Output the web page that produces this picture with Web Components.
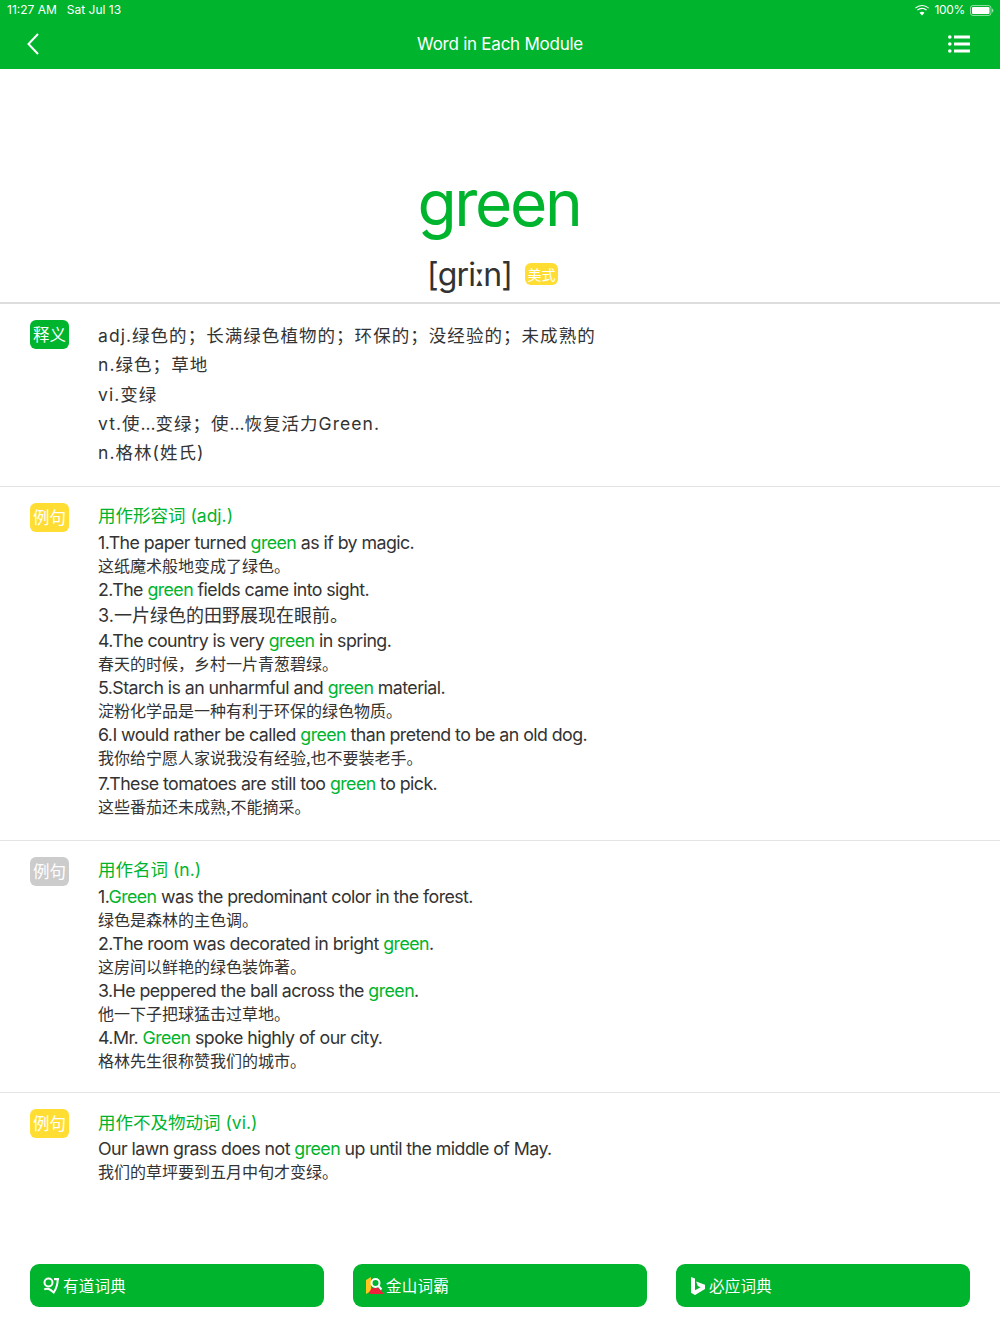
<!DOCTYPE html>
<html lang="zh">
<head>
<meta charset="utf-8">
<title>Word in Each Module</title>
<style>
html,body{margin:0;padding:0;background:#fff}
body{font-family:"Inter","Noto Sans CJK SC",sans-serif;color:#333}
</style>
</head>
<body>
<app-page>
  <status-bar></status-bar>
  <nav-bar title="Word in Each Module"></nav-bar>
  <word-head word="green" tag="美式"></word-head>
  <dict-section label="释义" tone="green" pb="18.500">
    <def-line>adj.绿色的；长满绿色植物的；环保的；没经验的；未成熟的</def-line>
    <def-line>n.绿色；草地</def-line>
    <def-line>vi.变绿</def-line>
    <def-line>vt.使<t-d>...</t-d>变绿；使<t-d>...</t-d>恢复活力Green.</def-line>
    <def-line>n.格林(姓氏)</def-line>
  </dict-section>
  <dict-section label="例句" tone="yellow" pb="21">
    <sec-title>用作形容词 (adj.)</sec-title>
    <en-line>1.The paper turned <g-w>green</g-w> as if by magic.</en-line>
    <cn-line>这纸魔术般地变成了绿色。</cn-line>
    <en-line>2.The <g-w>green</g-w> fields came into sight.</en-line>
    <en-line cjk>3.一片绿色的田野展现在眼前。</en-line>
    <en-line tall>4.The country is very <g-w>green</g-w> in spring.</en-line>
    <cn-line>春天的时候，乡村一片青葱碧绿。</cn-line>
    <en-line>5.Starch is an unharmful and <g-w>green</g-w> material.</en-line>
    <cn-line>淀粉化学品是一种有利于环保的绿色物质。</cn-line>
    <en-line>6.I would rather be called <g-w>green</g-w> than pretend to be an old dog.</en-line>
    <cn-line>我你给宁愿人家说我没有经验,也不要装老手。</cn-line>
    <en-line taller>7.These tomatoes are still too <g-w>green</g-w> to pick.</en-line>
    <cn-line>这些番茄还未成熟,不能摘采。</cn-line>
  </dict-section>
  <dict-section label="例句" tone="gray" pb="20">
    <sec-title>用作名词 (n.)</sec-title>
    <en-line>1.<g-w>Green</g-w> was the predominant color in the forest.</en-line>
    <cn-line>绿色是森林的主色调。</cn-line>
    <en-line>2.The room was decorated in bright <g-w>green</g-w>.</en-line>
    <cn-line>这房间以鲜艳的绿色装饰著。</cn-line>
    <en-line>3.He peppered the ball across the <g-w>green</g-w>.</en-line>
    <cn-line>他一下子把球猛击过草地。</cn-line>
    <en-line>4.Mr. <g-w>Green</g-w> spoke highly of our city.</en-line>
    <cn-line>格林先生很称赞我们的城市。</cn-line>
  </dict-section>
  <dict-section label="例句" tone="yellow" pb="0" last>
    <sec-title>用作不及物动词 (vi.)</sec-title>
    <en-line>Our lawn grass does not <g-w>green</g-w> up until the middle of May.</en-line>
    <cn-line>我们的草坪要到五月中旬才变绿。</cn-line>
  </dict-section>
  <foot-bar>
    <dict-button label="有道词典" icon="youdao"></dict-button>
    <dict-button label="金山词霸" icon="iciba"></dict-button>
    <dict-button label="必应词典" icon="bing"></dict-button>
  </foot-bar>
</app-page>
<script>
const GREEN='#00B42D';
const SANS='"Inter","Noto Sans CJK SC",sans-serif';
function def(name,css,html,init){
  customElements.define(name,class extends HTMLElement{
    constructor(){super();this.attachShadow({mode:'open'});}
    connectedCallback(){
      const f=typeof html==='function'?html(this):html;
      this.shadowRoot.innerHTML='<style>'+css+'</style>'+f;
      if(init)init(this);
    }
  });
}
def('app-page',`:host{display:flex;flex-direction:column;width:1000px;height:1334px;overflow:hidden;background:#fff;font-family:${SANS}}`,'<slot></slot>');
def('status-bar',`:host{display:flex;justify-content:space-between;align-items:center;height:20px;background:${GREEN};color:#fff;font:400 12px/20px "Inter",sans-serif;padding:0 6px 0 7px;box-sizing:border-box}
 .l{display:flex;gap:10px}.r{display:flex;align-items:center;gap:5px}.r span{letter-spacing:-.3px}`,
 `<div class="l"><span>11:27 AM</span><span>Sat Jul 13</span></div>
  <div class="r"><svg width="14" height="11" viewBox="0 0 14 11"><path fill="#fff" d="M7 1c2.400 0 4.600.9 6.300 2.500l.7-.8A10.300 10.300 0 0 0 7 0 10.300 10.300 0 0 0 0 2.700l.7.8A9.200 9.200 0 0 1 7 1zm0 3c1.600 0 3 .6 4.200 1.600l.8-.9A7.400 7.400 0 0 0 7 2.800a7.400 7.400 0 0 0-5 1.900l.8.9A6.200 6.200 0 0 1 7 4zm0 2.800c-.9 0-1.800.4-2.500 1l2.500 2.700 2.500-2.700c-.7-.6-1.600-1-2.500-1z"/></svg>
  <span>100%</span>
  <svg width="24" height="11" viewBox="0 0 24 11"><rect x=".5" y=".5" width="20.500" height="10" rx="2.500" fill="none" stroke="#fff" stroke-opacity=".55"/><rect x="2" y="2" width="17.500" height="7" rx="1" fill="#fff"/><path d="M22 3.500v4c.8-.3 1.400-1.100 1.400-2s-.6-1.700-1.400-2z" fill="#fff" fill-opacity=".6"/></svg></div>`);
def('nav-bar',`:host{display:flex;align-items:center;justify-content:space-between;height:49px;background:${GREEN};color:#fff;padding:0 30px 1px 27px;box-sizing:border-box}
 .t{font:400 17px/1 "Inter",sans-serif;letter-spacing:-.25px;position:absolute;left:0;right:0;text-align:center;pointer-events:none}
 svg{display:block}`,
 t=>`<svg width="12" height="22" viewBox="0 0 12 22"><path d="M11 1 1.500 11 11 21" fill="none" stroke="#fff" stroke-width="2"/></svg>
 <div class="t">${t.getAttribute('title')}</div>
 <svg width="22" height="18" viewBox="0 0 22 18" fill="#fff"><circle cx="1.800" cy="2" r="1.800"/><circle cx="1.800" cy="9" r="1.800"/><circle cx="1.800" cy="16" r="1.800"/><rect x="6" y=".5" width="16" height="3"/><rect x="6" y="7.500" width="16" height="3"/><rect x="6" y="14.500" width="16" height="3"/></svg>`);
def('word-head',`:host{display:flex;flex-direction:column;align-items:center;height:235px;box-sizing:border-box;border-bottom:2px solid #ddd}
 .w{font:400 64px/76px "Inter",sans-serif;color:${GREEN};margin:96px 2px 0 0;letter-spacing:-2.300px}
 .p{display:flex;align-items:center;gap:13px;margin-top:10px;margin-right:15px;line-height:40px}
 .ph{font:400 32px/40px "Inter",sans-serif;color:#333;letter-spacing:-.9px;padding-top:4px}
 .ph b{font:700 30px/40px "DejaVu Sans",sans-serif;letter-spacing:-2px}
 .tag{font:400 14px/22px "Noto Sans CJK SC",sans-serif;background:#FFDD33;color:#fff;border-radius:6px;width:33px;height:22px;text-align:center}`,
 t=>`<div class="w">${t.getAttribute('word')}</div><div class="p"><span class="ph">[ɡri<b>ː</b>n]</span><span class="tag">${t.getAttribute('tag')}</span></div>`);
def('dict-section',`:host{display:grid;grid-template-columns:39px 1fr;column-gap:29px;padding:16px 30px 0;box-sizing:border-box;border-bottom:1px solid #e4e4e4}
 :host([last]){border-bottom:0;flex:1}
 .tag{width:39px;height:29px;border-radius:6px;color:#fff;font:400 16.500px/29px "Noto Sans CJK SC",sans-serif;text-align:center}
 .green{background:${GREEN}}.yellow{background:#FFDD33}.gray{background:#CCCCCC}`,
 t=>`<div class="tag ${t.getAttribute('tone')}">${t.getAttribute('label')}</div><div class="c"><slot></slot></div>`,
 t=>{t.style.paddingBottom=t.getAttribute('pb')+'px';});
def('def-line',`:host{display:block;font:400 17.500px/29.300px ${SANS};letter-spacing:1.050px;color:#333}
 :host(:first-child){margin-top:1px}`,'<slot></slot>');
def('t-d',`:host{display:inline;letter-spacing:-.1px}`,'<slot></slot>');
def('sec-title',`:host{display:block;font:400 17.500px/26px ${SANS};color:${GREEN};padding:.5px 0 1px}`,'<slot></slot>');
def('en-line',`:host{display:block;font:400 17.800px/24px ${SANS};letter-spacing:-.56px;color:#333;padding-top:.5px}
 :host([cjk]){letter-spacing:0;font-size:18px;line-height:26px;padding-top:1px}
 :host([tall]){padding-top:.5px}
 :host([taller]){padding-top:2.500px}`,'<slot></slot>');
def('cn-line',`:host{display:block;font:400 16px/21.500px "Noto Sans CJK SC",sans-serif;color:#333;padding-bottom:1px}`,'<slot></slot>');
def('g-w',`:host{display:inline;color:${GREEN}}`,'<slot></slot>');
def('foot-bar',`:host{display:grid;grid-template-columns:repeat(3,294px);justify-content:space-between;padding:0 30px 27px;box-sizing:border-box}`,'<slot></slot>');
const ICONS={
 youdao:`<svg width="17" height="17" viewBox="0 0 17 17"><g fill="none" stroke="#fff" stroke-width="2"><circle cx="5.500" cy="5.500" r="4"/><path d="M1.200 12.500c1.700-1 3-1 4.500-.5 1.700.6 3 1.800 5 3.500 2-3 4-8 4-13.500"/></g><path d="M11 1h5v2.200h-5z" fill="#fff"/></svg>`,
 iciba:`<svg width="18" height="17" viewBox="0 0 18 17"><path d="M0 3 5 0v14l-5 3z" fill="#FFC71E"/><path d="M3 17c.5-4 3-6.500 6.500-6.500 2.500 0 4.500 1 5.500 3l3 3.500z" fill="#F0203C"/><circle cx="9.500" cy="6" r="4" fill="none" stroke="#fff" stroke-width="2"/><path d="M12.500 9l3 3.500" stroke="#fff" stroke-width="2"/></svg>`,
 bing:`<svg width="14" height="18" viewBox="0 0 14 18"><path fill="#fff" d="M0 0l4 1.400v11.900l5.600-3.100-2.800-1.300-1.700-4.300 8.900 3.100v4.300L4 18l-4-2.200z"/></svg>`
};
def('dict-button',`:host{display:flex;align-items:center;height:43px;background:${GREEN};border-radius:9px;color:#fff;font:400 15.500px/43px "Noto Sans CJK SC",sans-serif;padding-left:var(--pl,13px);box-sizing:border-box;letter-spacing:.25px}
 svg{display:block;margin-right:var(--mr,3px)}
 :host([icon=youdao]){--pl:13px;--mr:3px}
 :host([icon=iciba]){--pl:13px;--mr:2px}
 :host([icon=bing]){--pl:15px;--mr:4px}`,
 t=>ICONS[t.getAttribute('icon')]+`<span>${t.getAttribute('label')}</span>`);
</script>
</body>
</html>
